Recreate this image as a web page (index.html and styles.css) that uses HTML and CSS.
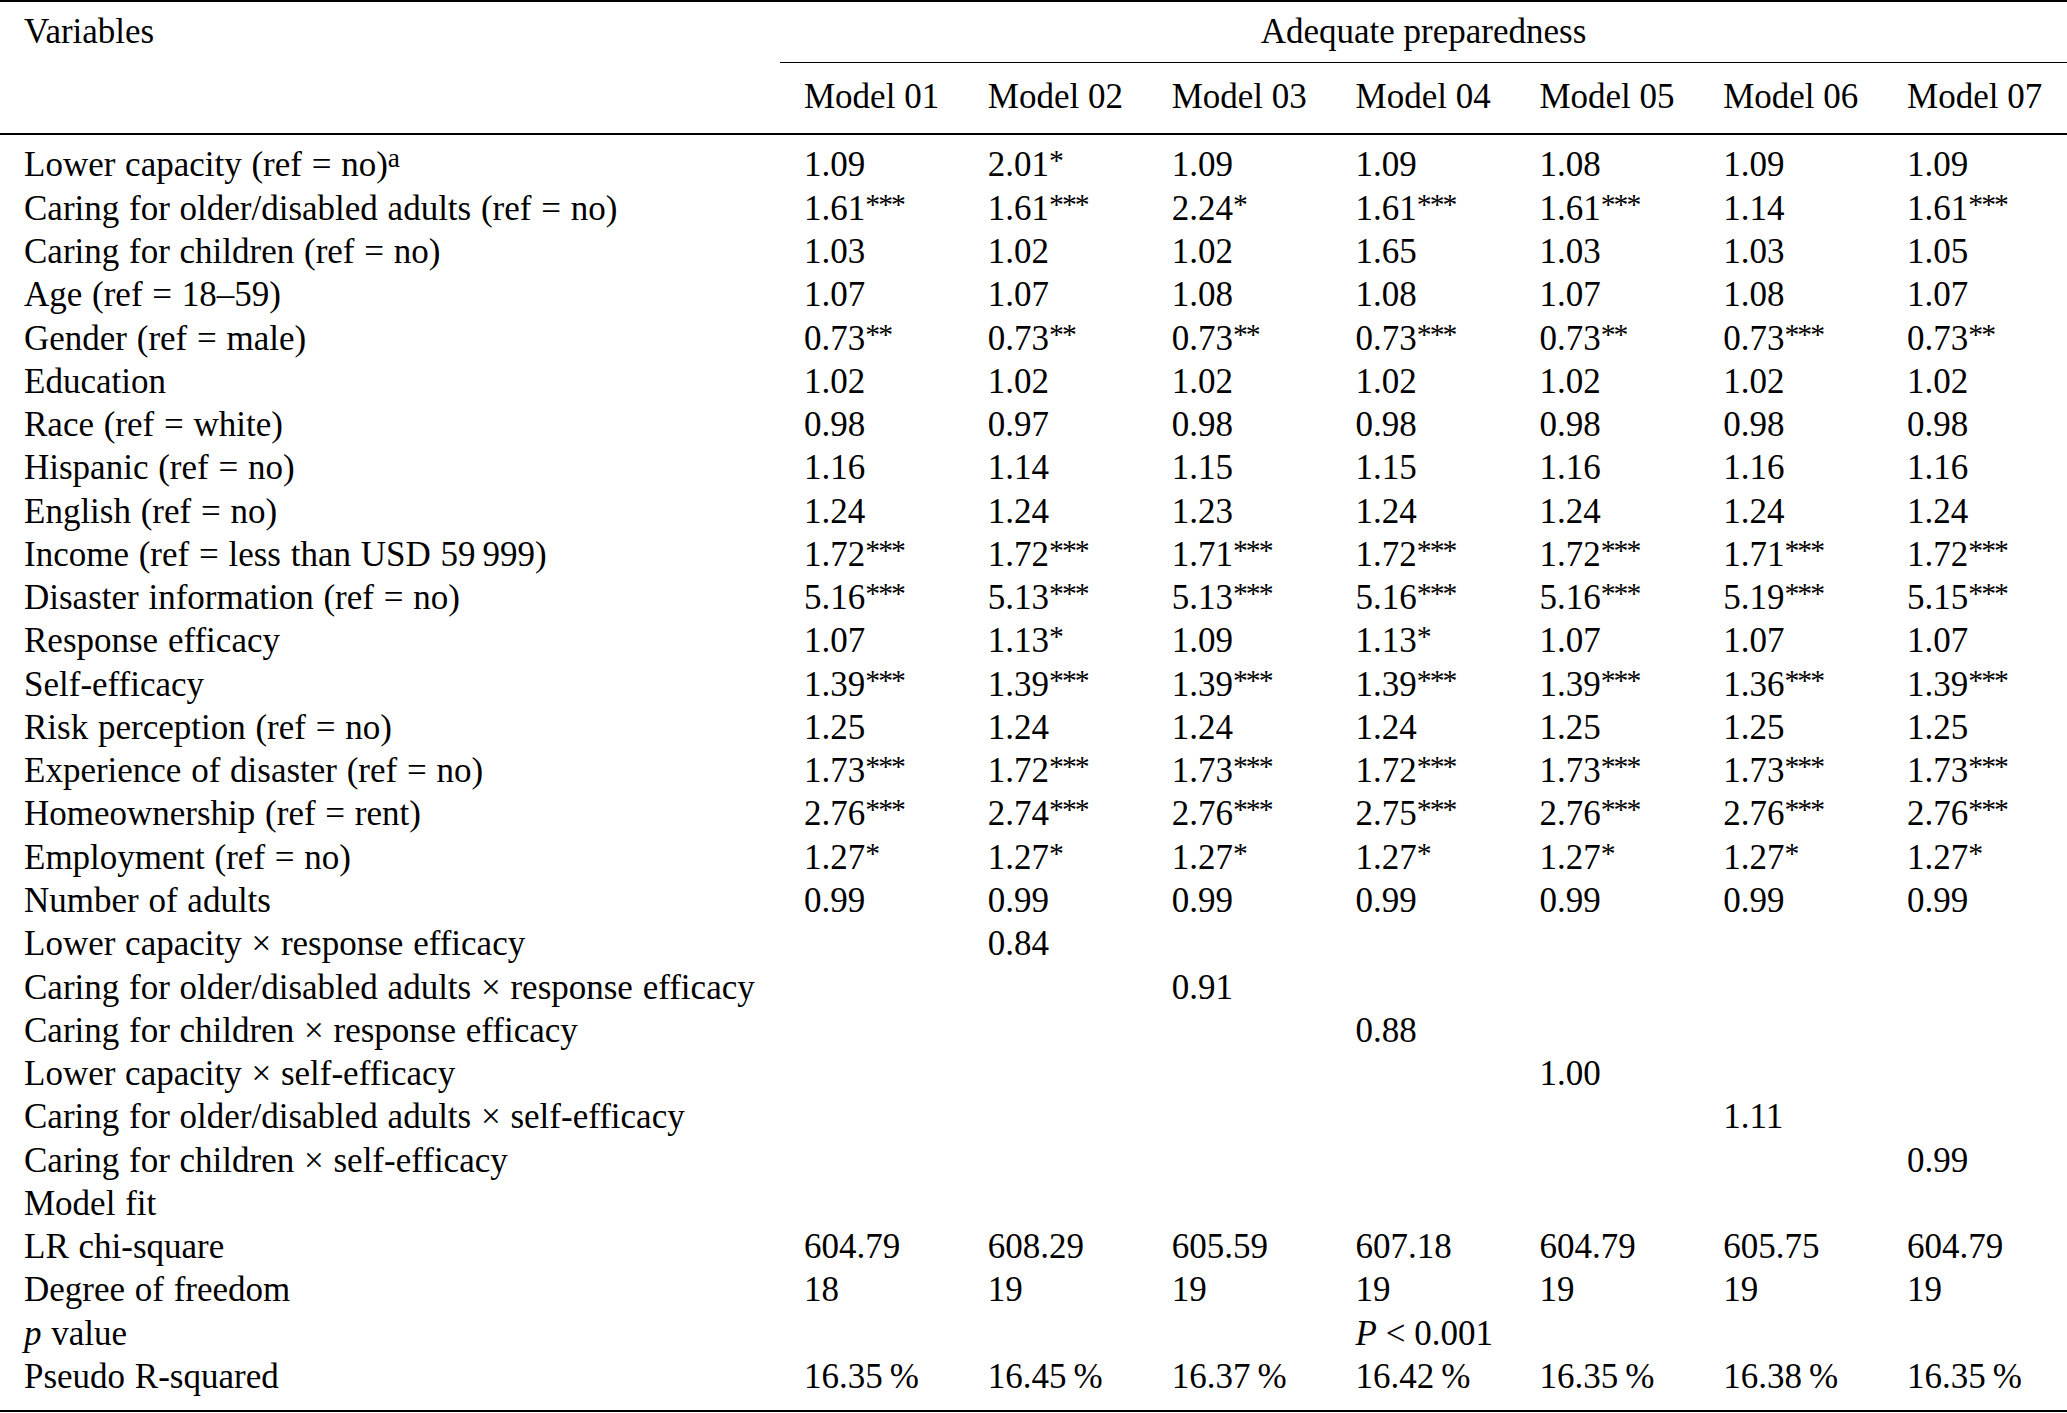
FILE: index.html
```html
<!DOCTYPE html>
<html lang="en">
<head>
<meta charset="utf-8">
<title>Adequate preparedness</title>
<link rel="stylesheet" href="styles.css">
</head>
<body>
<table class="tbl">
  <colgroup>
    <col class="col-var">
    <col span="7">
  </colgroup>
  <thead>
    <tr class="hrow1">
      <th rowspan="2" class="h-var">Variables</th>
      <th colspan="7" class="h-span">Adequate preparedness</th>
    </tr>
    <tr class="hrow2">
      <th>Model 01</th><th>Model 02</th><th>Model 03</th><th>Model 04</th><th>Model 05</th><th>Model 06</th><th>Model 07</th>
    </tr>
  </thead>
  <tbody>
    <tr><td>Lower capacity (ref = no)<sup class="note">a</sup></td><td>1.09</td><td>2.01<sup class="sig">*</sup></td><td>1.09</td><td>1.09</td><td>1.08</td><td>1.09</td><td>1.09</td></tr>
    <tr><td>Caring for older/disabled adults (ref = no)</td><td>1.61<sup class="sig">***</sup></td><td>1.61<sup class="sig">***</sup></td><td>2.24<sup class="sig">*</sup></td><td>1.61<sup class="sig">***</sup></td><td>1.61<sup class="sig">***</sup></td><td>1.14</td><td>1.61<sup class="sig">***</sup></td></tr>
    <tr><td>Caring for children (ref = no)</td><td>1.03</td><td>1.02</td><td>1.02</td><td>1.65</td><td>1.03</td><td>1.03</td><td>1.05</td></tr>
    <tr><td>Age (ref = 18–59)</td><td>1.07</td><td>1.07</td><td>1.08</td><td>1.08</td><td>1.07</td><td>1.08</td><td>1.07</td></tr>
    <tr><td>Gender (ref = male)</td><td>0.73<sup class="sig">**</sup></td><td>0.73<sup class="sig">**</sup></td><td>0.73<sup class="sig">**</sup></td><td>0.73<sup class="sig">***</sup></td><td>0.73<sup class="sig">**</sup></td><td>0.73<sup class="sig">***</sup></td><td>0.73<sup class="sig">**</sup></td></tr>
    <tr><td>Education</td><td>1.02</td><td>1.02</td><td>1.02</td><td>1.02</td><td>1.02</td><td>1.02</td><td>1.02</td></tr>
    <tr><td>Race (ref = white)</td><td>0.98</td><td>0.97</td><td>0.98</td><td>0.98</td><td>0.98</td><td>0.98</td><td>0.98</td></tr>
    <tr><td>Hispanic (ref = no)</td><td>1.16</td><td>1.14</td><td>1.15</td><td>1.15</td><td>1.16</td><td>1.16</td><td>1.16</td></tr>
    <tr><td>English (ref = no)</td><td>1.24</td><td>1.24</td><td>1.23</td><td>1.24</td><td>1.24</td><td>1.24</td><td>1.24</td></tr>
    <tr><td>Income (ref = less than USD 59&#8201;999)</td><td>1.72<sup class="sig">***</sup></td><td>1.72<sup class="sig">***</sup></td><td>1.71<sup class="sig">***</sup></td><td>1.72<sup class="sig">***</sup></td><td>1.72<sup class="sig">***</sup></td><td>1.71<sup class="sig">***</sup></td><td>1.72<sup class="sig">***</sup></td></tr>
    <tr><td>Disaster information (ref = no)</td><td>5.16<sup class="sig">***</sup></td><td>5.13<sup class="sig">***</sup></td><td>5.13<sup class="sig">***</sup></td><td>5.16<sup class="sig">***</sup></td><td>5.16<sup class="sig">***</sup></td><td>5.19<sup class="sig">***</sup></td><td>5.15<sup class="sig">***</sup></td></tr>
    <tr><td>Response efficacy</td><td>1.07</td><td>1.13<sup class="sig">*</sup></td><td>1.09</td><td>1.13<sup class="sig">*</sup></td><td>1.07</td><td>1.07</td><td>1.07</td></tr>
    <tr><td>Self-efficacy</td><td>1.39<sup class="sig">***</sup></td><td>1.39<sup class="sig">***</sup></td><td>1.39<sup class="sig">***</sup></td><td>1.39<sup class="sig">***</sup></td><td>1.39<sup class="sig">***</sup></td><td>1.36<sup class="sig">***</sup></td><td>1.39<sup class="sig">***</sup></td></tr>
    <tr><td>Risk perception (ref = no)</td><td>1.25</td><td>1.24</td><td>1.24</td><td>1.24</td><td>1.25</td><td>1.25</td><td>1.25</td></tr>
    <tr><td>Experience of disaster (ref = no)</td><td>1.73<sup class="sig">***</sup></td><td>1.72<sup class="sig">***</sup></td><td>1.73<sup class="sig">***</sup></td><td>1.72<sup class="sig">***</sup></td><td>1.73<sup class="sig">***</sup></td><td>1.73<sup class="sig">***</sup></td><td>1.73<sup class="sig">***</sup></td></tr>
    <tr><td>Homeownership (ref = rent)</td><td>2.76<sup class="sig">***</sup></td><td>2.74<sup class="sig">***</sup></td><td>2.76<sup class="sig">***</sup></td><td>2.75<sup class="sig">***</sup></td><td>2.76<sup class="sig">***</sup></td><td>2.76<sup class="sig">***</sup></td><td>2.76<sup class="sig">***</sup></td></tr>
    <tr><td>Employment (ref = no)</td><td>1.27<sup class="sig">*</sup></td><td>1.27<sup class="sig">*</sup></td><td>1.27<sup class="sig">*</sup></td><td>1.27<sup class="sig">*</sup></td><td>1.27<sup class="sig">*</sup></td><td>1.27<sup class="sig">*</sup></td><td>1.27<sup class="sig">*</sup></td></tr>
    <tr><td>Number of adults</td><td>0.99</td><td>0.99</td><td>0.99</td><td>0.99</td><td>0.99</td><td>0.99</td><td>0.99</td></tr>
    <tr><td>Lower capacity × response efficacy</td><td></td><td>0.84</td><td></td><td></td><td></td><td></td><td></td></tr>
    <tr><td>Caring for older/disabled adults × response efficacy</td><td></td><td></td><td>0.91</td><td></td><td></td><td></td><td></td></tr>
    <tr><td>Caring for children × response efficacy</td><td></td><td></td><td></td><td>0.88</td><td></td><td></td><td></td></tr>
    <tr><td>Lower capacity × self-efficacy</td><td></td><td></td><td></td><td></td><td>1.00</td><td></td><td></td></tr>
    <tr><td>Caring for older/disabled adults × self-efficacy</td><td></td><td></td><td></td><td></td><td></td><td>1.11</td><td></td></tr>
    <tr><td>Caring for children × self-efficacy</td><td></td><td></td><td></td><td></td><td></td><td></td><td>0.99</td></tr>
    <tr><td>Model fit</td><td></td><td></td><td></td><td></td><td></td><td></td><td></td></tr>
    <tr><td>LR chi-square</td><td>604.79</td><td>608.29</td><td>605.59</td><td>607.18</td><td>604.79</td><td>605.75</td><td>604.79</td></tr>
    <tr><td>Degree of freedom</td><td>18</td><td>19</td><td>19</td><td>19</td><td>19</td><td>19</td><td>19</td></tr>
    <tr><td><i>p</i> value</td><td></td><td></td><td></td><td><i>P</i> &lt; 0.001</td><td></td><td></td><td></td></tr>
    <tr><td>Pseudo R-squared</td><td>16.35&#8201;%</td><td>16.45&#8201;%</td><td>16.37&#8201;%</td><td>16.42&#8201;%</td><td>16.35&#8201;%</td><td>16.38&#8201;%</td><td>16.35&#8201;%</td></tr>
  </tbody>
</table>
</body>
</html>
```

FILE: styles.css
```css
html, body {
  margin: 0;
  padding: 0;
  background: #ffffff;
}

body {
  color: #000000;
  font-family: "Liberation Serif", "Times New Roman", serif;
  font-size: 35px;
}

.tbl {
  width: 2067px;
  table-layout: fixed;
  border-collapse: separate;
  border-spacing: 0;
  border-top: 2px solid #000;
  border-bottom: 2px solid #000;
}

.col-var {
  width: 780px;
}

.tbl th,
.tbl td {
  padding: 0 0 0 24px;
  line-height: 43.27px;
  text-align: left;
  font-weight: normal;
  vertical-align: baseline;
  white-space: nowrap;
}

.tbl tbody td:first-child {
  word-spacing: 1px;
}

.tbl .h-var {
  vertical-align: top;
  padding-top: 7.5px;
  border-bottom: 2px solid #000;
}

.tbl .h-span {
  text-align: center;
  padding: 7.5px 0 9.2px 0;
  border-bottom: 1px solid #000;
}

.tbl .hrow2 th {
  padding-top: 12.5px;
  padding-bottom: 14.2px;
  border-bottom: 2px solid #000;
}

.tbl tbody tr:first-child td {
  padding-top: 8.55px;
}

.tbl tbody tr:last-child td {
  padding-bottom: 11.6px;
}

.sig {
  font-size: 0.85em;
  letter-spacing: -2px;
  line-height: 0;
  vertical-align: 6px;
}

.note {
  font-size: 0.78em;
  line-height: 0;
  vertical-align: 9px;
}
```
